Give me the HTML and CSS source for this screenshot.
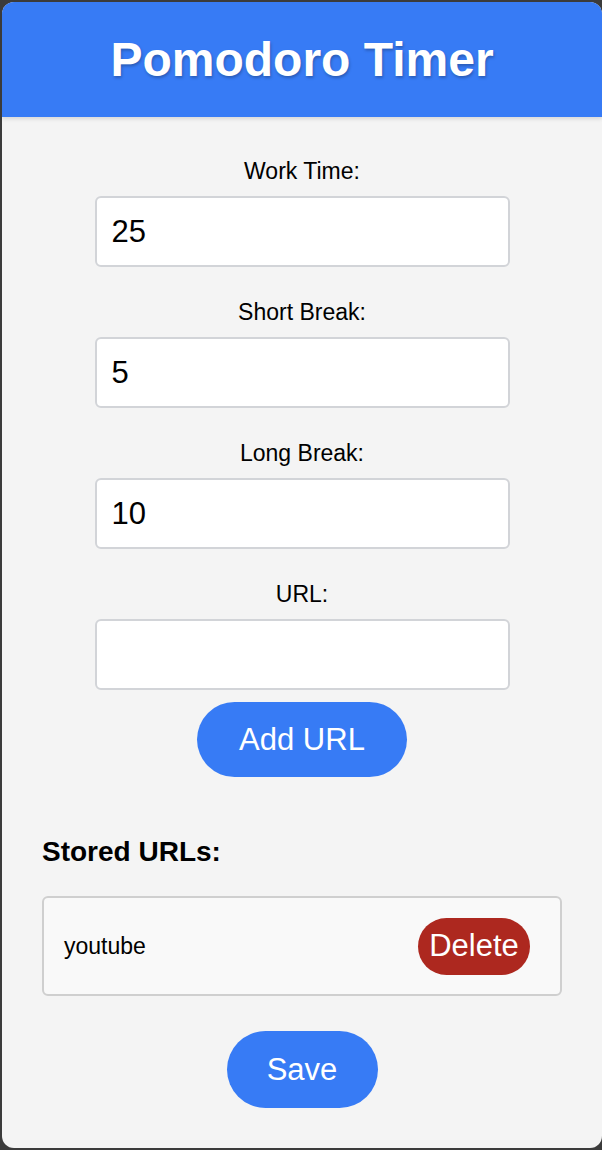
FILE: index.html
```html
<!DOCTYPE html>
<html>
<head>
<meta charset="utf-8">
<title>Pomodoro Timer</title>
<link rel="stylesheet" href="styles.css">
</head>
<body>
<div class="popup">
  <header class="header">
    <h1 class="title">Pomodoro Timer</h1>
  </header>
  <main class="content">
    <div class="field">
      <label class="label" for="work">Work Time:</label>
      <input class="input" id="work" type="text" value="25">
    </div>
    <div class="field">
      <label class="label" for="short">Short Break:</label>
      <input class="input" id="short" type="text" value="5">
    </div>
    <div class="field">
      <label class="label" for="long">Long Break:</label>
      <input class="input" id="long" type="text" value="10">
    </div>
    <div class="field field-url">
      <label class="label" for="url">URL:</label>
      <input class="input" id="url" type="text" value="">
    </div>
    <button class="btn btn-add">Add URL</button>

    <h2 class="stored-title">Stored URLs:</h2>
    <ul class="url-list">
      <li class="url-item">
        <span class="url-text">youtube</span>
        <button class="btn-delete">Delete</button>
      </li>
    </ul>
    <button class="btn btn-save">Save</button>
  </main>
</div>
</body>
</html>
```
FILE: styles.css
```css
html, body {
  margin: 0;
  padding: 0;
}
body {
  background: #3b3b3b;
  padding: 2px 0 2px 2px;
  height: 1146px;
  font-family: "Liberation Sans", Arial, Helvetica, sans-serif;
}
.popup {
  height: 1146px;
  background: #f4f4f4;
  border-radius: 12px;
  display: flex;
  flex-direction: column;
  overflow: hidden;
}
.header {
  height: 115px;
  background: #377bf5;
  display: flex;
  align-items: center;
  justify-content: center;
  box-shadow: 0 2px 4px rgba(0, 0, 0, 0.12);
  position: relative;
  z-index: 1;
}
.title {
  margin: 0;
  color: #fff;
  font-size: 48px;
  font-weight: bold;
  text-shadow: 1px 2px 3px rgba(0, 0, 0, 0.25);
}
.content {
  padding: 42px 40px 0 40px;
  display: flex;
  flex-direction: column;
  align-items: center;
}
.field {
  display: flex;
  flex-direction: column;
  align-items: center;
  margin-bottom: 33px;
}
.field-url {
  margin-bottom: 12px;
}
.label {
  font-size: 23px;
  line-height: 25px;
  color: #000;
  margin-bottom: 12px;
}
.input {
  box-sizing: border-box;
  width: 415px;
  height: 71px;
  border: 2px solid #d2d4d8;
  border-radius: 6px;
  background: #fff;
  padding: 0 15px;
  font-family: "Liberation Sans", Arial, sans-serif;
  font-size: 31px;
  color: #000;
  outline: none;
}
.btn {
  border: none;
  background: #377bf5;
  color: #fff;
  font-family: "Liberation Sans", Arial, sans-serif;
  font-size: 31px;
  border-radius: 40px;
  padding: 0 40px;
  cursor: pointer;
}
.btn-add {
  width: 210px;
  height: 75px;
  padding: 0;
}
.stored-title {
  align-self: stretch;
  margin: 59px 0 29px 0;
  font-size: 28px;
  line-height: 31px;
  font-weight: bold;
  color: #000;
}
.url-list {
  align-self: stretch;
  list-style: none;
  margin: 0;
  padding: 0;
}
.url-item {
  box-sizing: border-box;
  height: 100px;
  background: #f9f9f9;
  border: 2px solid #cfcfcf;
  border-radius: 6px;
  padding: 0 30px 0 20px;
  display: flex;
  align-items: center;
  justify-content: space-between;
}
.url-text {
  font-size: 23px;
  color: #000;
}
.btn-delete {
  border: none;
  background: #ad281f;
  color: #fff;
  font-family: "Liberation Sans", Arial, sans-serif;
  font-size: 31px;
  height: 57px;
  width: 112px;
  padding: 0;
  border-radius: 30px;
}
.btn-save {
  margin-top: 35px;
  width: 151px;
  height: 77px;
  padding: 0;
}
```
